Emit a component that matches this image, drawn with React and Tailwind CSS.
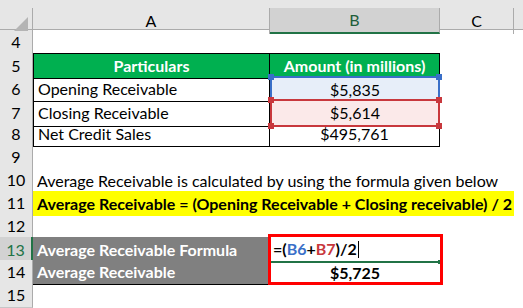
import React from 'react';

const COLS = 'grid grid-cols-[33px_237px_170px_74px_1fr]';
const FONT = { fontFamily: 'Lato, "Liberation Sans", sans-serif' };

// Row header + cells
function Row({ num, active, children }) {
  return (
    <div className={`${COLS} h-[23px]`}>
      <div
        className={
          active
            ? 'flex items-center justify-center bg-[#d2d2d2] text-[#217346] border-b border-[#c6c6c6] border-r-2 border-r-[#217346] text-[16px]'
            : 'flex items-center justify-center bg-[#e6e6e6] text-black border-b border-[#c6c6c6] border-r border-r-[#ababab] text-[16px]'
        }
      >
        {num}
      </div>
      {children}
    </div>
  );
}

function Corner({ color, className }) {
  return <div className={`absolute w-[6px] h-[6px] ${color} ${className}`} />;
}

export default function App() {
  return (
    <div className="relative w-[523px] h-[308px] overflow-hidden bg-white text-black text-[16px]" style={FONT}>
      {/* top strip */}
      <div className="h-[8px] bg-[#e6e6e6]" />

      {/* column headers */}
      <div className={`${COLS} h-[22px] bg-[#e6e6e6] border-b border-[#ababab]`}>
        <div className="relative border-r border-[#ababab]">
          <svg className="absolute right-[4px] bottom-[3px]" width="14" height="14" viewBox="0 0 14 14">
            <polygon points="14,0 14,14 0,14" fill="#b4b4b4" />
          </svg>
        </div>
        <div className="flex items-center justify-center border-r border-[#ababab]">A</div>
        <div className="flex items-center justify-center bg-[#d2d2d2] text-[#1e5e3a] border-r border-[#ababab] border-b-2 border-b-[#217346]">B</div>
        <div className="flex items-center justify-center border-r border-[#ababab]">C</div>
        <div />
      </div>

      <Row num="4">
        <div className="col-span-4" />
      </Row>

      <Row num="5">
        <div className="flex items-center justify-center bg-[#00b050] text-white font-bold border border-black">Particulars</div>
        <div className="flex items-center justify-center bg-[#00b050] text-white font-bold border-y border-r border-black">Amount (in millions)</div>
        <div className="col-span-2" />
      </Row>

      <Row num="6">
        <div className="flex items-center pl-[4px] border-x border-b border-black">Opening Receivable</div>
        <div className="relative flex items-center justify-center bg-[#e7eef9] border-x-2 border-t-2 border-[#3a6fc8]">
          $5,835
          <Corner color="bg-[#3a6fc8]" className="-left-[4px] -top-[4px]" />
          <Corner color="bg-[#3a6fc8]" className="-right-[4px] -top-[4px]" />
        </div>
        <div className="col-span-2" />
      </Row>

      <Row num="7">
        <div className="flex items-center pl-[4px] border-x border-b border-black">Closing Receivable</div>
        <div className="relative flex items-center justify-center bg-[#fbe9e9] border-2 border-[#c8383d]">
          $5,614
          <Corner color="bg-[#c8383d]" className="-left-[4px] -top-[4px]" />
          <Corner color="bg-[#c8383d]" className="-right-[4px] -top-[4px]" />
          <Corner color="bg-[#c8383d]" className="-left-[4px] -bottom-[4px]" />
          <Corner color="bg-[#c8383d]" className="-right-[4px] -bottom-[4px]" />
        </div>
        <div className="col-span-2" />
      </Row>

      <Row num="8">
        <div className="flex items-center pl-[4px] border-x border-b border-black">Net Credit Sales</div>
        <div className="flex items-center justify-center border-r border-b border-black">$495,761</div>
        <div className="col-span-2" />
      </Row>

      <Row num="9">
        <div className="col-span-4" />
      </Row>

      <Row num="10">
        <div className="col-span-4 flex items-center pl-[4px] whitespace-nowrap">
          Average Receivable is calculated by using the formula given below
        </div>
      </Row>

      <Row num="11">
        <div className="col-span-3 flex items-center pl-[4px] bg-[#ffff00] font-bold whitespace-nowrap">
          Average Receivable = (Opening Receivable + Closing receivable) / 2
        </div>
        <div />
      </Row>

      <Row num="12">
        <div className="col-span-4" />
      </Row>

      <Row num="13" active>
        <div className="flex items-center pl-[4px] bg-[#808080] text-white font-bold border-b border-black">Average Receivable Formula</div>
        <div className="relative flex items-center pl-[3px] font-bold border-b-2 border-[#217346]">
          <span>=(</span>
          <span className="text-[#3a6fc8]">B6</span>
          <span>+</span>
          <span className="text-[#c8383d]">B7</span>
          <span>)/2</span>
          <span className="ml-[1px] w-[1px] h-[17px] bg-black" />
          <div className="absolute right-[-2px] bottom-[-3px] w-[4px] h-[4px] bg-[#217346]" />
        </div>
        <div className="col-span-2" />
      </Row>

      <Row num="14">
        <div className="flex items-center pl-[4px] bg-[#808080] text-white font-bold border-b border-black">Average Receivable</div>
        <div className="flex items-center justify-center font-bold">$5,725</div>
        <div className="col-span-2" />
      </Row>

      <Row num="15">
        <div className="col-span-4" />
      </Row>

      {/* highlight box over B13:B14 */}
      <div className="absolute left-[268px] top-[234px] w-[175px] h-[51px] border-[3px] border-[#ff0000] pointer-events-none" />
    </div>
  );
}
